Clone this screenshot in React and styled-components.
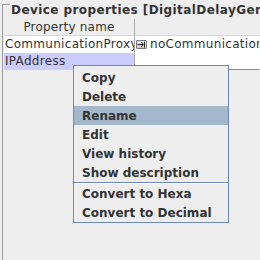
import React from 'react';
import styled, { createGlobalStyle } from 'styled-components';

const Global = createGlobalStyle`
  html, body { margin: 0; padding: 0; background: #eeeeee; }
  body { width: 260px; height: 260px; overflow: hidden; font-family: "DejaVu Sans", "Noto Sans", sans-serif; color: #333333; }
  * { box-sizing: border-box; }
`;

const Screen = styled.div`
  position: relative;
  width: 260px;
  height: 260px;
  padding: 4px 0 0 2px;
  overflow: hidden;
`;

const Frame = styled.section`
  height: 100%;
  border-left: 1px solid #9a9a9a;
  border-top: 1px solid #9a9a9a;
  padding: 0 0 0 1px;
`;

const Title = styled.h2`
  width: fit-content;
  margin: -3px 0 1px 6px;
  padding: 0 1px;
  background: #eeeeee;
  font: bold 12px "DejaVu Sans", sans-serif;
  letter-spacing: 0.42px;
  line-height: 16px;
  color: #333333;
  white-space: nowrap;
`;

const Table = styled.div`
  display: grid;
  grid-template-columns: 131px 1fr;
  grid-auto-rows: 17px;
  font: 12px "DejaVu Sans", sans-serif;
  letter-spacing: 0.3px;
  color: #333333;
`;

const HeadCell = styled.div`
  display: flex;
  align-items: center;
  justify-content: center;
  background: #eeeeee;
  letter-spacing: 0.2px;
  border-right: 1px solid ${p => (p.$last ? 'transparent' : '#a8a8a8')};
  border-bottom: 1px solid #d4d4d4;
  white-space: nowrap;
  overflow: hidden;
`;

const Cell = styled.div`
  display: flex;
  align-items: center;
  gap: 3px;
  padding-left: 1px;
  background: ${p => (p.$selected ? '#ccccff' : '#ffffff')};
  border-right: 1px solid ${p => (p.$first ? '#a8a8a8' : 'transparent')};
  border-bottom: 1px solid ${p => (p.$focusLine ? '#7a8cb4' : 'transparent')};
  white-space: nowrap;
  overflow: hidden;
`;

const LinkButton = styled.span`
  flex: none;
  display: inline-flex;
  align-items: center;
  justify-content: center;
  width: 11px;
  height: 9px;
  border: 1px solid #7a7a7a;
  border-radius: 1px;
  background: linear-gradient(#f4f4f4, #c8c8c8);
`;

const Menu = styled.ul`
  position: absolute;
  left: 73px;
  top: 65px;
  width: 156px;
  margin: 0;
  padding: 2px 0 0 0;
  list-style: none;
  background: #eeeeee;
  border: 1px solid #6f87b6;
`;

const Item = styled.li`
  height: 19px;
  display: flex;
  align-items: center;
  padding-left: 8px;
  font: bold 12px "DejaVu Sans", sans-serif;
  color: #333333;
  background: ${p => (p.$active ? '#a3b8cc' : 'transparent')};
  white-space: nowrap;
`;

const Separator = styled.li`
  height: 2px;
  border-top: 1px solid #6f87b6;
  border-bottom: 1px solid #ffffff;
`;

export default function App() {
  return (
    <>
      <Global />
      <Screen>
        <Frame>
          <Title>Device properties [DigitalDelayGenerator]</Title>
          <Table>
            <HeadCell>Property name</HeadCell>
            <HeadCell $last />
            <Cell $first>CommunicationProxy</Cell>
            <Cell>
              <LinkButton>
                <svg width="9" height="7" viewBox="0 0 9 7">
                  <path d="M0.5 3.5H6" stroke="#222" strokeWidth="1" />
                  <path d="M4 1L6.5 3.5L4 6" stroke="#222" strokeWidth="1" fill="none" />
                  <path d="M7.5 0.5V6.5" stroke="#222" strokeWidth="1" />
                </svg>
              </LinkButton>
              noCommunicationProxy
            </Cell>
            <Cell $first $selected>IPAddress</Cell>
            <Cell $focusLine />
          </Table>
        </Frame>
        <Menu>
          <Item>Copy</Item>
          <Item>Delete</Item>
          <Item $active>Rename</Item>
          <Item>Edit</Item>
          <Item>View history</Item>
          <Item>Show description</Item>
          <Separator />
          <Item>Convert to Hexa</Item>
          <Item>Convert to Decimal</Item>
        </Menu>
      </Screen>
    </>
  );
}
